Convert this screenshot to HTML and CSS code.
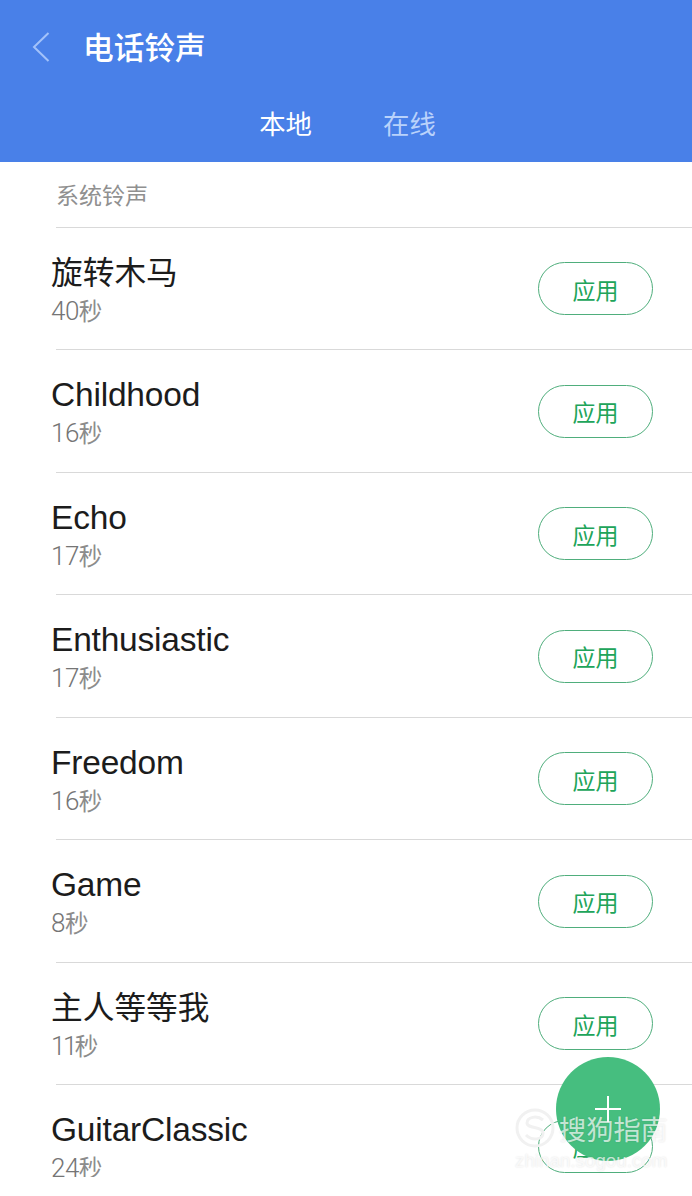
FILE: index.html
```html
<!DOCTYPE html>
<html lang="zh-CN">

<head>
    <meta charset="UTF-8">
    <meta name="viewport" content="width=device-width, initial-scale=1.0">
    <title>电话铃声</title>
    <link rel="stylesheet" href="styles.css">
</head>

<body>
    <div class="header">
        <div class="title">
            <svg class="back" width="18" height="30" viewBox="0 0 18 30">
                <path d="M16.5 1 L2 15 L16.5 29" />
            </svg>
            <h1>电话铃声</h1>
        </div>
        <div class="tabs">
            <a class="tab active">本地</a>
            <a class="tab">在线</a>
        </div>
    </div>

    <div class="list">
        <h2>系统铃声</h2>
        <ul>
            <li>
                <div class="info">
                    <p class="name cn">旋转木马</p>
                    <p class="time">40<span>秒</span></p>
                </div>
                <button class="apply">应用</button>
            </li>
            <li>
                <div class="info">
                    <p class="name">Childhood</p>
                    <p class="time">16<span>秒</span></p>
                </div>
                <button class="apply">应用</button>
            </li>
            <li>
                <div class="info">
                    <p class="name">Echo</p>
                    <p class="time">17<span>秒</span></p>
                </div>
                <button class="apply">应用</button>
            </li>
            <li>
                <div class="info">
                    <p class="name">Enthusiastic</p>
                    <p class="time">17<span>秒</span></p>
                </div>
                <button class="apply">应用</button>
            </li>
            <li>
                <div class="info">
                    <p class="name">Freedom</p>
                    <p class="time">16<span>秒</span></p>
                </div>
                <button class="apply">应用</button>
            </li>
            <li>
                <div class="info">
                    <p class="name">Game</p>
                    <p class="time">8<span>秒</span></p>
                </div>
                <button class="apply">应用</button>
            </li>
            <li>
                <div class="info">
                    <p class="name cn">主人等等我</p>
                    <p class="time narrow">11<span>秒</span></p>
                </div>
                <button class="apply">应用</button>
            </li>
            <li>
                <div class="info">
                    <p class="name">GuitarClassic</p>
                    <p class="time">24<span>秒</span></p>
                </div>
                <button class="apply">应用</button>
            </li>
        </ul>
    </div>

    <!-- 悬浮添加按钮 -->
    <div class="add">
        <svg width="26" height="26" viewBox="0 0 26 26">
            <path d="M0 13 H26 M13 0 V26" />
        </svg>
    </div>

    <!-- 水印 -->
    <div class="watermark">
        <div class="brand">
            <svg width="40" height="40" viewBox="0 0 40 40">
                <circle cx="20" cy="20" r="18" />
                <path d="M28 12 C22 7 12 9 12 15 C12 21 28 18 28 25 C28 32 17 33 11 27" />
            </svg>
            <span>搜狗指南</span>
        </div>
        <p class="site">zhinan.sogou.com</p>
    </div>
</body>

</html>
```
FILE: styles.css
```css
* {
    padding: 0;
    margin: 0;
    box-sizing: border-box;
}

body {
    position: relative;
    height: 1196px;
    overflow: hidden;
    background-color: #fff;
    font-family: "Liberation Sans", "Noto Sans CJK SC", sans-serif;
}

.header {
    height: 162px;
    background-color: #4980e8;
    color: #fff;
}

.title {
    display: flex;
    align-items: center;
    height: 94px;
    padding-left: 32px;
}

.back {
    fill: none;
    stroke: #a3c2fa;
    stroke-width: 2;
}

.title h1 {
    margin-left: 33px;
    padding-top: 3px;
    font-size: 30.7px;
    font-weight: 500;
    line-height: 40px;
}

.tabs {
    display: flex;
    justify-content: center;
    gap: 71px;
    padding-left: 3px;
}

.tab {
    font-size: 26.4px;
    line-height: 62px;
    color: #b9d2fb;
}

.tabs .active {
    color: #fff;
}

/* 列表底部在1177处截断 */
.list {
    height: 1015px;
    overflow: hidden;
}

.list h2 {
    height: 64.9px;
    margin-left: 56px;
    font-size: 23px;
    font-weight: 400;
    line-height: 68px;
    color: #909090;
}

.list ul {
    list-style: none;
}

.list li {
    display: flex;
    justify-content: space-between;
    height: 122.5px;
    margin-left: 56px;
    padding: 26px 39px 0 0;
    border-top: 1px solid #d9d9d9;
}

.info {
    margin-left: -5px;
}

.name {
    height: 39px;
    font-size: 33.5px;
    line-height: 38px;
    letter-spacing: -0.2px;
    color: #1c1c1c;
}

.cn {
    font-size: 31.7px;
    line-height: 39px;
    letter-spacing: 0;
}

.time {
    height: 36px;
    font-family: Roboto, "Noto Sans CJK SC", sans-serif;
    font-size: 26px;
    font-weight: 300;
    line-height: 36px;
    letter-spacing: -0.5px;
    color: #757575;
}

.narrow {
    letter-spacing: -2.5px;
}

.time span {
    font-size: 23.5px;
    font-weight: 400;
    color: #8c8c8c;
}

.apply {
    width: 115px;
    height: 53px;
    margin-top: 8.2px;
    border: 1px solid #4fae7c;
    border-radius: 27px;
    background-color: #fff;
    font-family: "Noto Sans CJK SC", sans-serif;
    font-size: 23px;
    line-height: 40px;
    color: #20a45a;
}

.add {
    position: absolute;
    left: 556px;
    top: 1057px;
    display: flex;
    align-items: center;
    justify-content: center;
    width: 104px;
    height: 104px;
    border-radius: 50%;
    background-color: #46be7f;
}

.add svg {
    fill: none;
    stroke: #fff;
    stroke-width: 2;
}

.watermark {
    position: absolute;
    left: 515px;
    top: 1107px;
    width: 160px;
    color: rgba(255, 255, 255, 0.7);
    text-shadow: 0 0 2px rgba(0, 0, 0, 0.12);
}

.brand {
    display: flex;
    align-items: center;
    gap: 4px;
    height: 42px;
    font-size: 27.2px;
    white-space: nowrap;
}

.brand svg {
    fill: none;
    stroke: #f1f1f1;
    stroke-width: 3;
}

.site {
    font-size: 18.8px;
    line-height: 24px;
}
```
